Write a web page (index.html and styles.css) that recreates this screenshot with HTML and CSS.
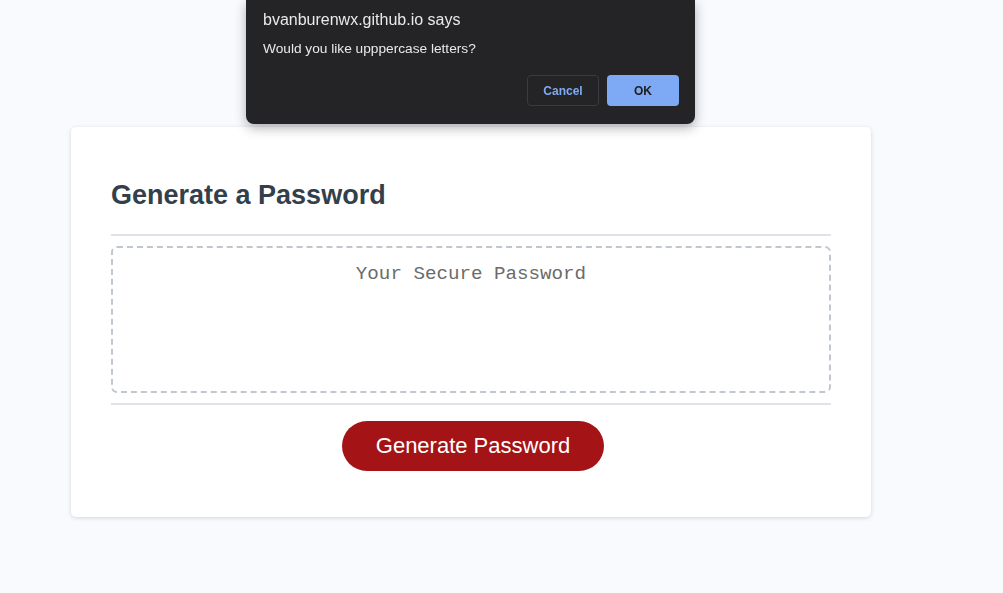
FILE: index.html
```html
<!DOCTYPE html>
<html lang="en">
<head>
    <meta charset="UTF-8">
    <meta name="viewport" content="width=device-width, initial-scale=1.0">
    <title>Password Generator</title>
    <link rel="stylesheet" href="styles.css">
</head>
<body>

<div class="wrapper">
    <div class="card">
        <div class="card-header">
            <h2>Generate a Password</h2>
        </div>
        <div class="card-body">
            <textarea readonly id="password" placeholder="Your Secure Password" aria-label="Generated Password"></textarea>
        </div>
        <div class="card-footer">
            <button id="generate" class="btn">Generate Password</button>
        </div>
    </div>
</div>

<!-- prompt shown while picking the character sets -->
<div class="dialog">
    <div class="dialog-title">bvanburenwx.github.io says</div>
    <div class="dialog-message">Would you like upppercase letters?</div>
    <div class="dialog-buttons">
        <button class="dialog-cancel">Cancel</button>
        <button class="dialog-ok">OK</button>
    </div>
</div>

</body>
</html>
```

FILE: styles.css
```css
* {
    box-sizing: border-box;
}

html,
body {
    height: 100%;
}

body {
    font-family: "Liberation Sans", Arial, sans-serif;
    background-color: #f9fafe;
    margin: 0;
    padding: 0;
}

.wrapper {
    padding-top: 127px;
    padding-left: 71px;
}

.card {
    width: 800px;
    background: #fff;
    border-radius: 5px;
    padding: 40px 40px 46px;
    box-shadow: 0 1px 4px rgba(0, 0, 0, 0.15);
}

.card-header h2 {
    margin: 0;
    padding: 13px 0 24px;
    font-size: 27px;
    line-height: 30px;
    color: #333f4b;
    border-bottom: 2px solid #dfe2e6;
}

.card-body {
    padding: 10px 0;
    border-bottom: 2px solid #dfe2e6;
}

#password {
    display: block;
    width: 100%;
    height: 147px;
    resize: none;
    border: 2px dashed #c0c7cf;
    border-radius: 6px;
    padding: 15px;
    font-family: "Liberation Mono", "Courier New", monospace;
    font-size: 19.2px;
    text-align: center;
    outline: none;
}

#password::placeholder {
    color: #6b6b6b;
}

.card-footer {
    display: flex;
    justify-content: center;
    padding: 16px 0 0 4px;
}

.btn {
    width: 262px;
    height: 50px;
    border: none;
    border-radius: 25px;
    background-color: #a41416;
    color: #fff;
    font-family: "Liberation Sans", Arial, sans-serif;
    font-size: 22px;
    cursor: pointer;
}

.dialog {
    position: fixed;
    top: 0;
    left: 246px;
    width: 449px;
    height: 124px;
    background: #242426;
    border-radius: 0 0 8px 8px;
    box-shadow: 0 4px 12px rgba(0, 0, 0, 0.3);
    padding: 11px 16px 0 17px;
    color: #e9e9eb;
    font-family: "Liberation Sans", Arial, sans-serif;
}

.dialog-title {
    font-size: 16px;
    line-height: 18px;
}

.dialog-message {
    font-size: 13.7px;
    line-height: 16px;
    margin-top: 12px;
}

.dialog-buttons {
    display: flex;
    justify-content: flex-end;
    gap: 8px;
    margin-top: 18px;
}

.dialog-buttons button {
    height: 31px;
    width: 72px;
    border-radius: 4px;
    font-family: "Liberation Sans", Arial, sans-serif;
    font-size: 12px;
    font-weight: bold;
}

.dialog-cancel {
    background: #242426;
    border: 1px solid #3a3b3e;
    color: #7ea9f2;
}

.dialog-ok {
    background: #7ea9f5;
    border: none;
    color: #1d1e20;
}
```
